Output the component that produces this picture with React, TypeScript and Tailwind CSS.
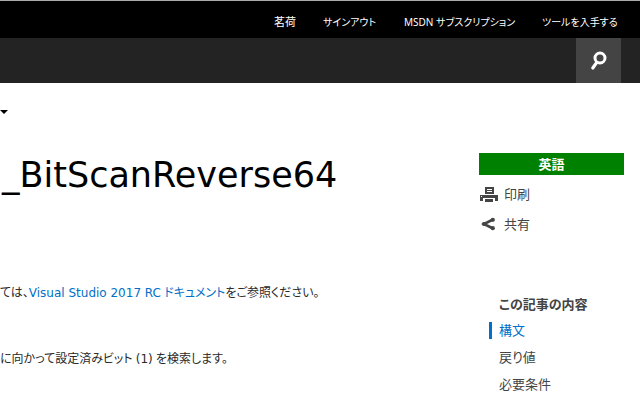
const accountLinks = [
  { label: "茗荷", className: "w-[49px] text-[11px]" },
  { label: "サインアウト", className: "w-[81px] text-[10px]" },
  { label: "MSDN サブスクリプション", className: "w-[138px] text-[10px]" },
  { label: "ツールを入手する", className: "w-20 text-[10px]" },
];

const sections = [
  { label: "構文", active: true },
  { label: "戻り値", active: false },
  { label: "必要条件", active: false },
];

function SearchIcon() {
  return (
    <svg aria-hidden="true" className="size-5" viewBox="0 0 20 20" fill="none" stroke="#fff">
      <circle cx="11" cy="7" r="5" strokeWidth="3" />
      <path d="M7.6 11.6 3.8 17" strokeWidth="3.2" strokeLinecap="round" />
    </svg>
  );
}

function PrintIcon() {
  return (
    <svg aria-hidden="true" className="h-[18px] w-5" viewBox="0 0 20 18" fill="#444">
      <path fillRule="evenodd" d="M6 2h9v7H6zM8 4v1h5V4zM8 6v1h5V6z" />
      <path fillRule="evenodd" d="M1 10h18v6h-3v-3H4v3H1zM2 11v1h1v-1z" />
      <path d="M6 14h8v3H6z" />
    </svg>
  );
}

function ShareIcon() {
  return (
    <svg aria-hidden="true" className="h-4 w-5" viewBox="0 0 20 16" fill="#444">
      <path d="M14 3.5 5 8l9 4.5" fill="none" stroke="#444" strokeWidth="2.6" />
      <circle cx="4.9" cy="8" r="2" />
      <circle cx="13.8" cy="3.8" r="2.1" />
      <circle cx="13.8" cy="12.2" r="2.1" />
    </svg>
  );
}

function Header() {
  return (
    <header>
      <nav className="flex h-[38px] items-center justify-end border-t border-[#aaa] bg-black pr-[18px] text-white">
        {accountLinks.map((link) => (
          <a key={link.label} href="#" className={`${link.className} whitespace-nowrap pt-1 leading-4`}>
            {link.label}
          </a>
        ))}
      </nav>
      <div className="flex justify-end bg-[#232323] pr-[19px]">
        <button type="button" aria-label="検索" className="flex size-[45px] items-center justify-center bg-[#444]">
          <SearchIcon />
        </button>
      </div>
    </header>
  );
}

function Article() {
  return (
    <main className="min-w-0 flex-1 overflow-hidden whitespace-nowrap">
      <button type="button" aria-label="メニュー" className="mt-[27px] block">
        <svg aria-hidden="true" className="h-1 w-2" viewBox="0 0 8 4">
          <path d="M0 0h8L4 4z" />
        </svg>
      </button>
      <h1 className="mt-9 pl-0.5 font-['DejaVu_Sans'] text-[35px] leading-[50px] text-black">_BitScanReverse64</h1>
      <p className="mt-[83px] text-xs leading-5">
        ては、
        <a href="#" className="text-[#0070c8]">
          <span className="font-['DejaVu_Sans']">Visual Studio 2017 RC</span> ドキュメント
        </a>
        をご参照ください。
      </p>
      <p className="mt-[46px] text-xs leading-5">
        に向かって設定済みビット <span className="font-['DejaVu_Sans']">(1)</span> を検索します。
      </p>
    </main>
  );
}

function Sidebar() {
  return (
    <aside className="mr-4 w-[145px] shrink-0 pt-[70px] text-[13px] text-[#444]">
      <button type="button" className="block h-[22px] w-full bg-[#008000] font-bold leading-[22px] text-white">
        英語
      </button>
      <div className="mt-[9px] grid gap-[10px] leading-5">
        <a href="#" className="flex items-center gap-[5px]">
          <PrintIcon />
          印刷
        </a>
        <a href="#" className="flex items-center gap-[5px]">
          <ShareIcon />
          共有
        </a>
      </div>
      <nav className="ml-[10px] mt-[62px] leading-[17px]">
        <h2 className="pl-[10px] font-bold">この記事の内容</h2>
        <ul className="mt-[9px] space-y-[10px]">
          {sections.map((section) => (
            <li
              key={section.label}
              className={
                section.active
                  ? "border-l-3 border-[#0070c8] pl-[7px] text-[#0070c8]"
                  : "border-l-3 border-transparent pl-[7px]"
              }
            >
              <a href="#">{section.label}</a>
            </li>
          ))}
        </ul>
      </nav>
    </aside>
  );
}

export default function App() {
  return (
    <div
      lang="ja"
      className="h-screen overflow-hidden bg-white font-['Noto_Sans','Noto_Sans_CJK_JP',sans-serif] text-[#2a2a2a] [font-feature-settings:'palt']"
    >
      <Header />
      <div className="flex">
        <Article />
        <Sidebar />
      </div>
    </div>
  );
}
